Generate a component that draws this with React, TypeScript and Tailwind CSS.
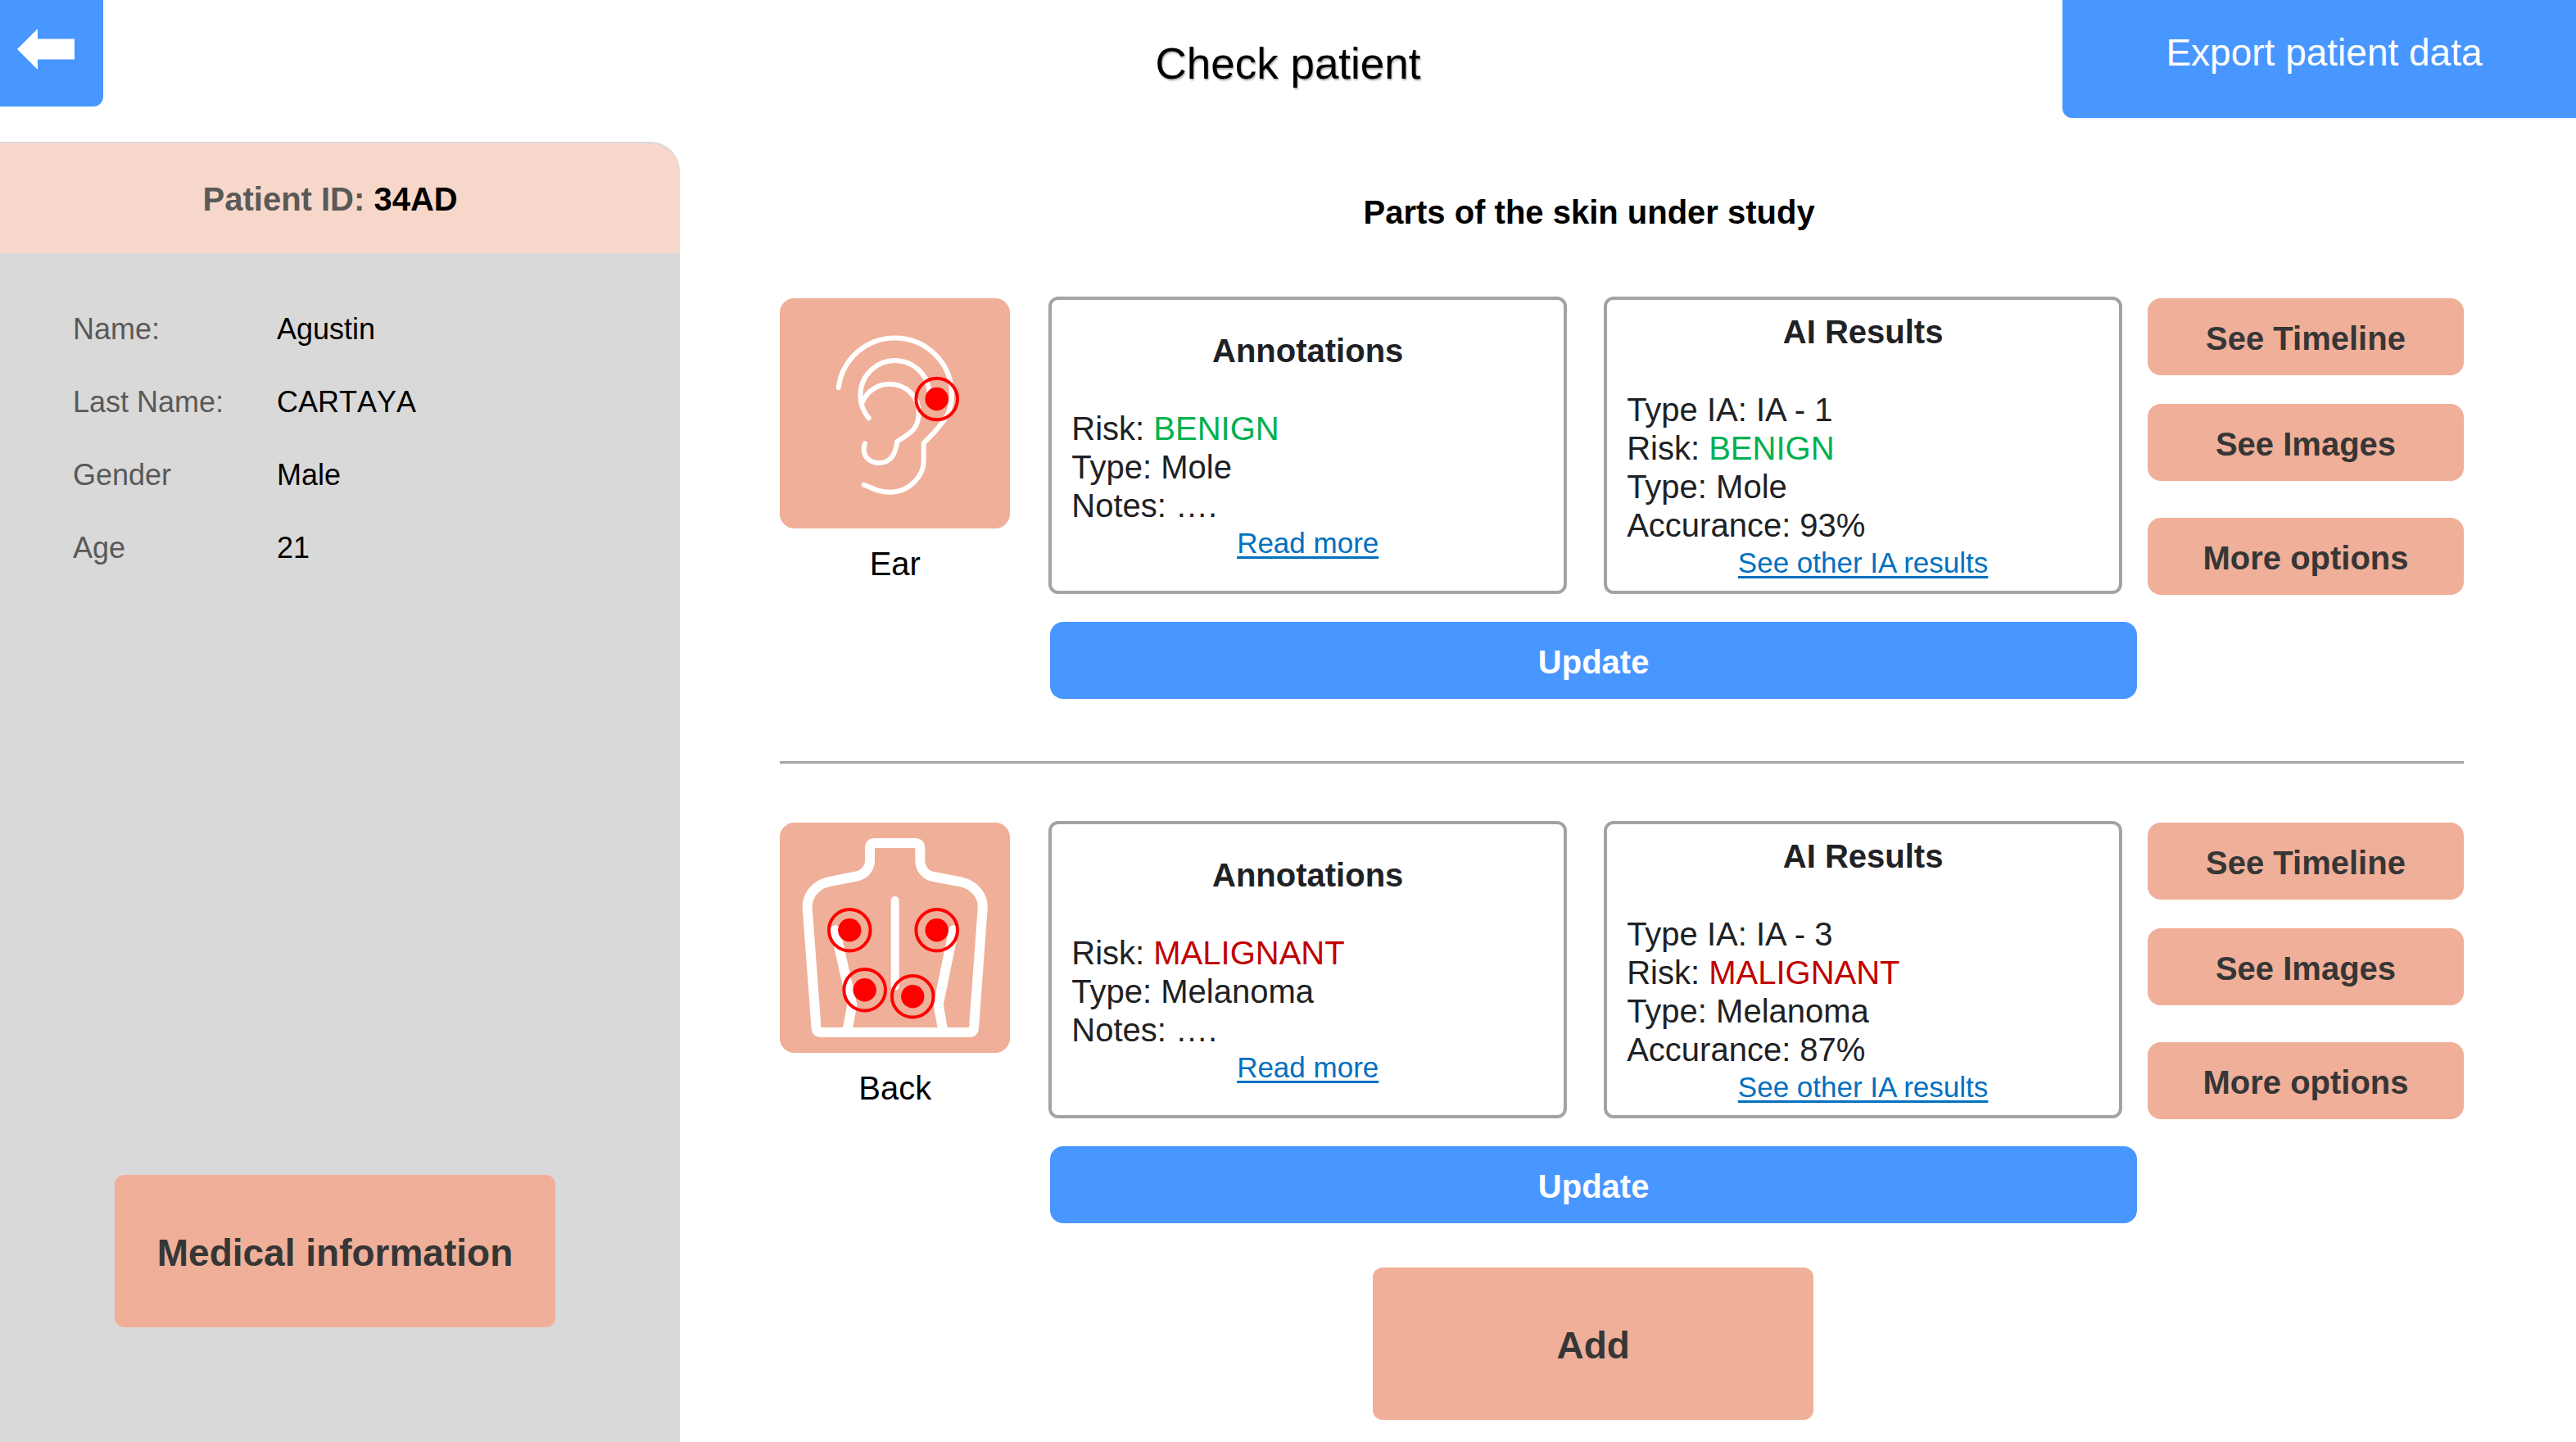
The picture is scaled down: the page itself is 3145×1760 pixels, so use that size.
import React from "react";

type Risk = "BENIGN" | "MALIGNANT";
type Point = { x: number; y: number };

type Study = {
  part: string;
  drawing: React.ReactNode;
  spots: Point[];
  risk: Risk;
  type: string;
  model: string;
  accuracy: string;
};

const EarDrawing = (
  <g fill="none" stroke="#fff" strokeWidth="6" strokeLinecap="round">
    <path d="M71.7 109.3A69.5 69.5 0 0 1 140.7 48.4A69.3 69.3 0 0 1 210 117.7C210 131 206 142 200 150C193 159 185 168 175.7 177V199C175.7 216 159 236.7 135 236.7C120 236.7 114 232 102.7 227.7" />
    <path d="M108.7 146.3C101 137 98 129 98.5 117.7A42.2 42.2 0 0 1 140.7 76A42.2 42.2 0 0 1 182.5 113" />
    <path d="M101 126.7C107 113 120 104.7 134 104.7C154 104.7 169.7 120 169.7 139C169.7 161 158 165 143.3 175C142 186 138 201 121 201C109 201 101 192 103 182Q103 180 104 177.3" />
  </g>
);

const BackDrawing = (
  <g fill="none" stroke="#fff" strokeWidth="12" strokeLinecap="round">
    <path d="M116 25H165Q171.3 25 171.3 31V46C171.3 56 178 64.5 187.5 66L221 72.3C237 75.5 248.5 89 247.7 104.3L237 251Q236.7 256 231.7 256H50Q45 256 44.6 251L33.7 104.3C33 89 44 75.5 59.3 72.3L94 65.5C103 64 110 56 110 46V31Q110 25 116 25Z" />
    <path d="M67.7 131.3L88.3 222.7L83 251" />
    <path d="M212.3 131.3L193.7 222L198.7 251" />
    <path strokeWidth="10" d="M140.7 95V200" />
  </g>
);

const studies: Study[] = [
  {
    part: "Ear",
    drawing: EarDrawing,
    spots: [{ x: 191.7, y: 123 }],
    risk: "BENIGN",
    type: "Mole",
    model: "IA - 1",
    accuracy: "93%",
  },
  {
    part: "Back",
    drawing: BackDrawing,
    spots: [
      { x: 85.3, y: 131.3 },
      { x: 191.7, y: 131.3 },
      { x: 103.7, y: 204.3 },
      { x: 162.3, y: 212.3 },
    ],
    risk: "MALIGNANT",
    type: "Melanoma",
    model: "IA - 3",
    accuracy: "87%",
  },
];

const details = [
  ["Name:", "Agustin"],
  ["Last Name:", "CARTAYA"],
  ["Gender", "Male"],
  ["Age", "21"],
];

function RiskLine({ risk }: { risk: Risk }) {
  return (
    <p>
      Risk:{" "}
      <span className={risk === "BENIGN" ? "text-[#00b050]" : "text-[#c00000]"}>{risk}</span>
    </p>
  );
}

function InfoCard({
  title,
  link,
  children,
}: {
  title: string;
  link: string;
  children: React.ReactNode;
}) {
  return (
    <section className="flex min-h-[363px] flex-1 flex-col justify-center rounded-xl border-4 border-[#a3a3a3] px-6 pt-0.5 text-[40px] leading-[47px] text-[#202124]">
      <h3 className="mb-12 text-center leading-[48px] font-bold">{title}</h3>
      {children}
      <a
        href="#"
        className="self-center text-[35px] leading-[44px] text-[#0070c0] underline decoration-[3px] underline-offset-4"
      >
        {link}
      </a>
    </section>
  );
}

function OptionButton({ children }: { children: React.ReactNode }) {
  return (
    <button
      type="button"
      className="h-[94px] rounded-2xl bg-[#f0af99] pt-1 text-[40px] leading-[48px] font-bold text-[#363636]"
    >
      {children}
    </button>
  );
}

function StudyRow({ study }: { study: Study }) {
  return (
    <article className="grid grid-cols-[281px_1fr_386px]">
      <figure className="mt-0.5">
        <svg
          viewBox="0 0 281 281"
          className="block w-full rounded-[18px] bg-[#f0af99]"
          role="img"
          aria-label={study.part}
        >
          {study.drawing}
          {study.spots.map((spot) => (
            <g key={`${spot.x}-${spot.y}`}>
              <circle cx={spot.x} cy={spot.y} r="25.3" fill="none" stroke="#f00" strokeWidth="4" />
              <circle cx={spot.x} cy={spot.y} r="14.2" fill="#f00" />
            </g>
          ))}
        </svg>
        <figcaption className="mt-[19px] text-center text-[40px] leading-[48px] text-black">
          {study.part}
        </figcaption>
      </figure>

      <div className="mr-[13px] ml-[47px] flex flex-col gap-[34px]">
        <div className="mr-[18px] flex gap-[45px]">
          <InfoCard title="Annotations" link="Read more">
            <RiskLine risk={study.risk} />
            <p>Type: {study.type}</p>
            <p>Notes: ….</p>
          </InfoCard>
          <InfoCard title="AI Results" link="See other IA results">
            <p>Type IA: {study.model}</p>
            <RiskLine risk={study.risk} />
            <p>Type: {study.type}</p>
            <p>Accurance: {study.accuracy}</p>
          </InfoCard>
        </div>
        <button
          type="button"
          className="ml-0.5 h-[94px] rounded-2xl bg-[#4896ff] pt-1 text-[40px] leading-[48px] font-bold text-white"
        >
          Update
        </button>
      </div>

      <div className="mt-0.5 flex flex-col">
        <div className="mb-[45px] flex flex-col gap-[35px]">
          <OptionButton>See Timeline</OptionButton>
          <OptionButton>See Images</OptionButton>
        </div>
        <OptionButton>More options</OptionButton>
      </div>
    </article>
  );
}

export default function App() {
  return (
    <div className="flex min-h-screen flex-col bg-white font-['Liberation_Sans',Arial,sans-serif] text-black">
      <header className="grid grid-cols-[1fr_auto_1fr] items-start">
        <button
          type="button"
          aria-label="Back"
          className="h-[130px] w-[126px] rounded-br-xl bg-[#4896ff] pb-[10px] pl-[21px]"
        >
          <svg viewBox="0 0 70 50" className="block h-[50px] w-[70px]" fill="#fff" aria-hidden="true">
            <path d="M0 25L25 0V12.5H70V37.5H25V50Z" />
          </svg>
        </button>
        <h1 className="pt-12 text-[53px] leading-[60px] [text-shadow:1px_2px_2px_rgba(0,0,0,0.3)]">
          Check patient
        </h1>
        <button
          type="button"
          className="h-[144px] w-[627px] justify-self-end rounded-bl-xl bg-[#4896ff] pb-4 pl-3 text-[46px] leading-[56px] text-white"
        >
          Export patient data
        </button>
      </header>

      <div className="mt-[29px] flex flex-1">
        <aside className="flex w-[26.4%] flex-col overflow-hidden rounded-tr-[36px] bg-[#d9d9d9]">
          <h2 className="mt-0.5 rounded-tr-[36px] bg-[#f7d7ca] pt-11 pr-6 pb-[42px] text-center text-[40px] leading-[48px] font-bold">
            <span className="text-[#595959]">Patient ID:</span> 34AD
          </h2>
          <dl className="mt-[71px] grid grid-cols-[249px_1fr] gap-y-[45px] pl-[89px] text-[36px] leading-[44px] [font-kerning:none]">
            {details.map(([label, value]) => (
              <React.Fragment key={label}>
                <dt className="text-[#595959]">{label}</dt>
                <dd>{value}</dd>
              </React.Fragment>
            ))}
          </dl>
          <button
            type="button"
            className="mt-auto mb-[140px] ml-[140px] h-[186px] w-[538px] rounded-xl bg-[#f0af99] pt-1 text-[46px] leading-[56px] font-bold text-[#363636]"
          >
            Medical information
          </button>
        </aside>

        <main className="flex flex-1 flex-col pt-[62px] pr-[137px] pl-[122px]">
          <h2 className="mr-[399px] ml-[319px] text-center text-[40px] leading-[48px] font-bold">
            Parts of the skin under study
          </h2>
          <div className="mt-[79px]">
            <StudyRow study={studies[0]} />
            <hr className="mt-[76px] mb-[70px] border-t-[3px] border-[#a3a3a3]" />
            <StudyRow study={studies[1]} />
          </div>
          <div className="mt-[54px] mr-[399px] mb-[27px] ml-[329px] flex justify-center">
            <button
              type="button"
              className="h-[186px] w-[538px] rounded-xl bg-[#f0af99] pt-1 text-[46px] leading-[56px] font-bold text-[#363636]"
            >
              Add
            </button>
          </div>
        </main>
      </div>
    </div>
  );
}
